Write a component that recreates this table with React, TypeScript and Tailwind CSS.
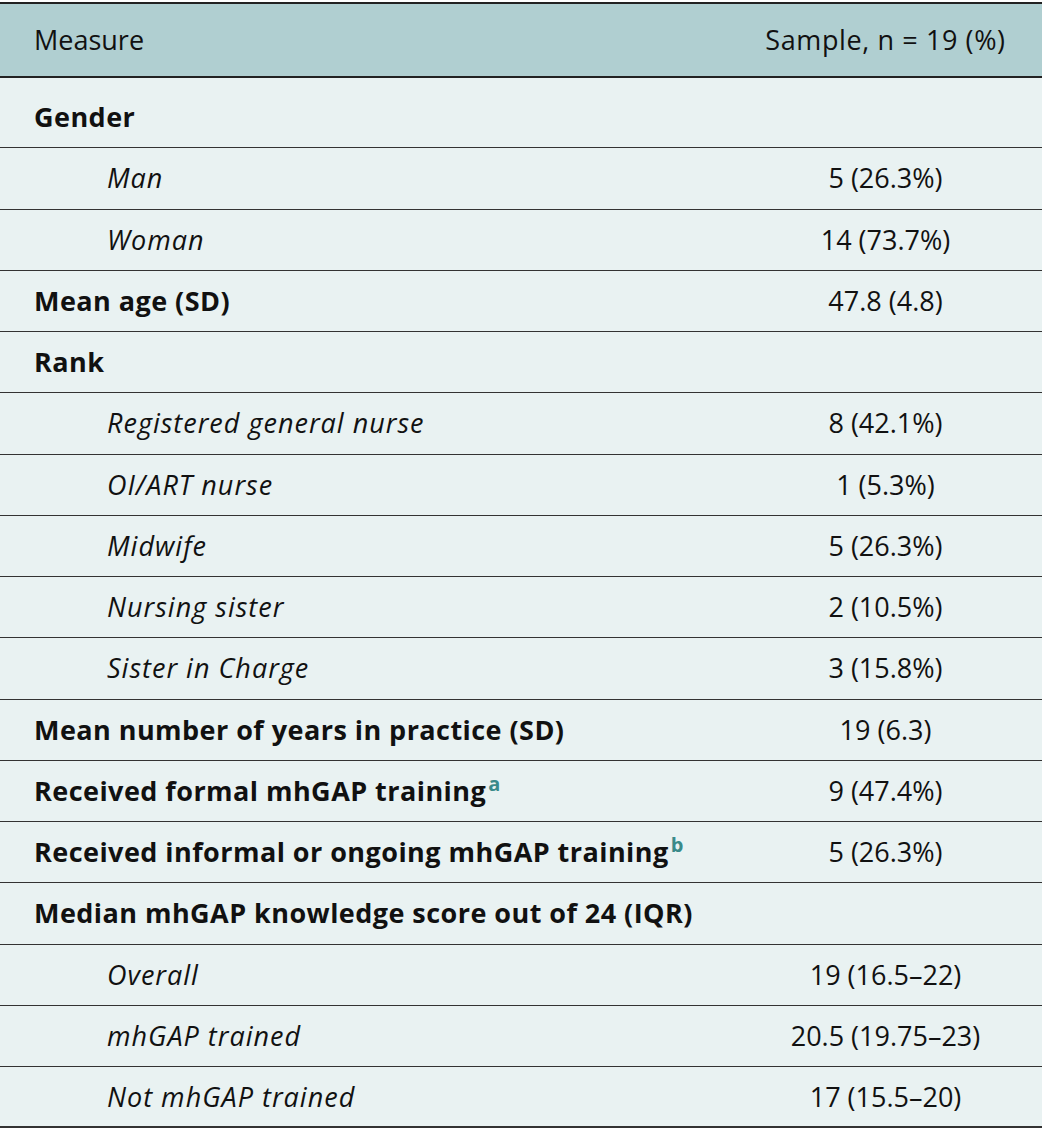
type Row = {
  label: string;
  value?: string;
  kind: 'head' | 'sub';
  note?: string;
};

const rows: Row[] = [
  { label: 'Gender', kind: 'head' },
  { label: 'Man', value: '5 (26.3%)', kind: 'sub' },
  { label: 'Woman', value: '14 (73.7%)', kind: 'sub' },
  { label: 'Mean age (SD)', value: '47.8 (4.8)', kind: 'head' },
  { label: 'Rank', kind: 'head' },
  { label: 'Registered general nurse', value: '8 (42.1%)', kind: 'sub' },
  { label: 'OI/ART nurse', value: '1 (5.3%)', kind: 'sub' },
  { label: 'Midwife', value: '5 (26.3%)', kind: 'sub' },
  { label: 'Nursing sister', value: '2 (10.5%)', kind: 'sub' },
  { label: 'Sister in Charge', value: '3 (15.8%)', kind: 'sub' },
  { label: 'Mean number of years in practice (SD)', value: '19 (6.3)', kind: 'head' },
  { label: 'Received formal mhGAP training', note: 'a', value: '9 (47.4%)', kind: 'head' },
  { label: 'Received informal or ongoing mhGAP training', note: 'b', value: '5 (26.3%)', kind: 'head' },
  { label: 'Median mhGAP knowledge score out of 24 (IQR)', kind: 'head' },
  { label: 'Overall', value: '19 (16.5–22)', kind: 'sub' },
  { label: 'mhGAP trained', value: '20.5 (19.75–23)', kind: 'sub' },
  { label: 'Not mhGAP trained', value: '17 (15.5–20)', kind: 'sub' },
];

export default function App() {
  return (
    <div className="w-[1042px] bg-white pt-[2px] font-['Open_Sans','Liberation_Sans',sans-serif] text-[27px] leading-[36px] text-[#111]">
      <div className="border-t-2 border-b-2 border-[#222]">
        <div className="flex h-[72px] items-center bg-[#b0cfd1]">
          <div className="flex-1 pl-[34px]">Measure</div>
          <div className="w-[313px] text-center tracking-[0.6px]">Sample, n = 19 (%)</div>
        </div>
      </div>
      <div className="bg-[#e9f2f2] pt-[9px]">
        {rows.map((r, i) => (
          <div
            key={i}
            className={
              'flex h-[61.25px] items-center border-b border-[#333] ' +
              (i === rows.length - 1 ? 'border-b-2' : '')
            }
          >
            <div
              className={
                r.kind === 'head'
                  ? 'flex-1 pl-[34px] font-bold tracking-[0.45px]'
                  : 'flex-1 pl-[107px] italic tracking-[1px]'
              }
            >
              {r.label}
              {r.note && (
                <sup className="ml-[2px] text-[20px] font-bold tracking-normal text-[#3a8a8a]">{r.note}</sup>
              )}
            </div>
            <div className="w-[313px] text-center">{r.value}</div>
          </div>
        ))}
      </div>
    </div>
  );
}
